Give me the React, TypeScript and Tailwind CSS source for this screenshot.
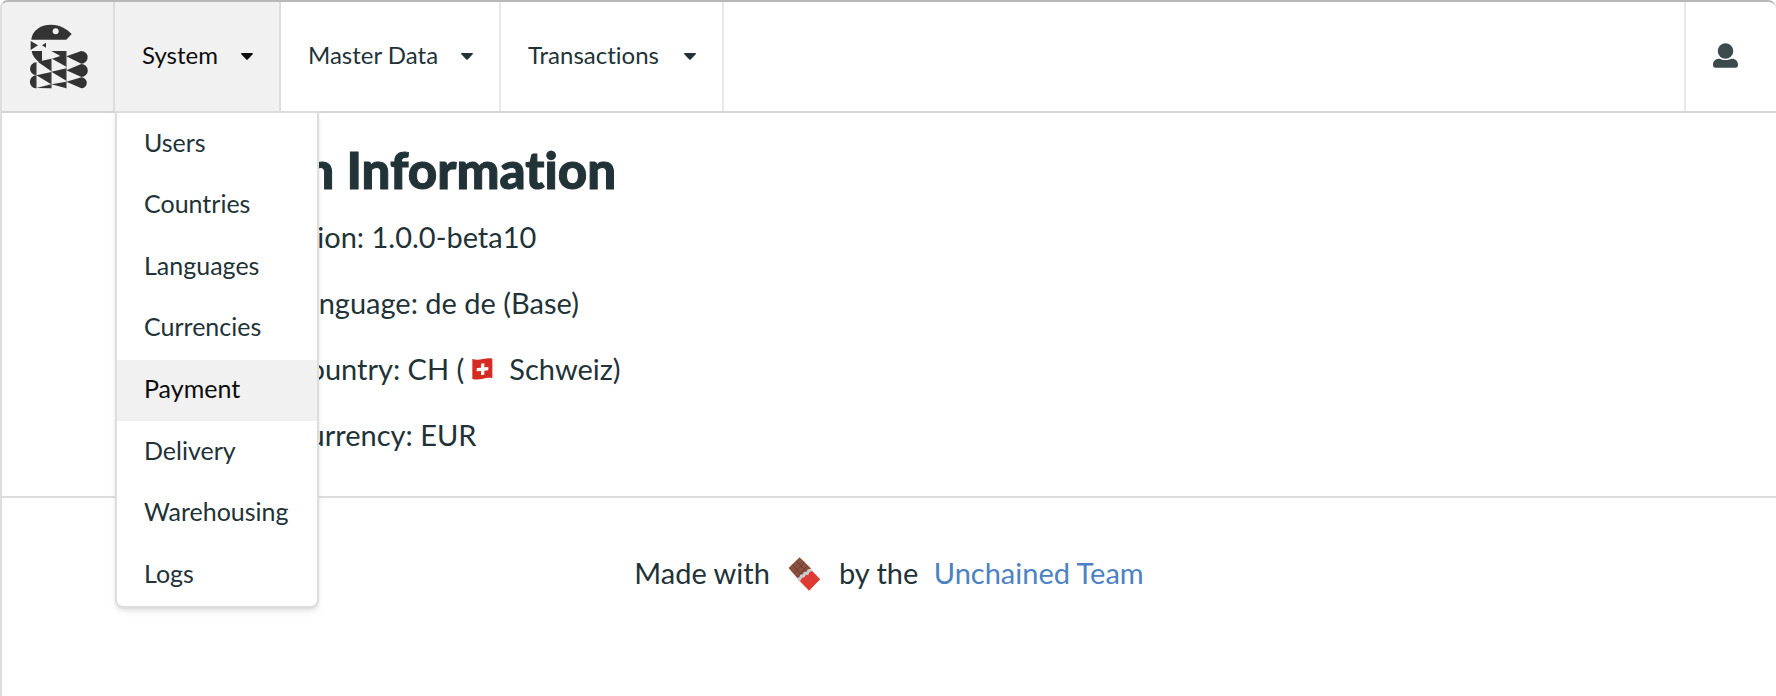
import React from "react";

const systemItems = [
  "Users",
  "Countries",
  "Languages",
  "Currencies",
  "Payment",
  "Delivery",
  "Warehousing",
  "Logs",
];

function Caret() {
  return (
    <svg viewBox="0 0 12 7" className="mt-0.5 h-[7px] w-3" fill="currentColor" aria-hidden="true">
      <path d="M.8 0h10.4c.7 0 1 .8.5 1.3L6.7 6.5a1 1 0 0 1-1.4 0L.3 1.3C-.2.8.1 0 .8 0z" />
    </svg>
  );
}

function Logo() {
  return (
    <svg viewBox="88 70 180 195" className="h-[65px] w-[60px]" fill="#333333" aria-hidden="true">
      <path d="M95 117C97 90 122 72 154 72c28 0 50 15 62 28l-16 17z" />
      <circle cx="168" cy="92" r="9" fill="#f1f1f1" />
      <path d="M93 121l22 13-22 14zM139 126v15l-12-7z" />
      <path d="M96 151h31v29l-9 4c-12-9-20-19-22-33z" />
      <path d="M155 151h45v47l-43-24 25-8z" />
      <path d="M114 183l41-9v38zM110 224l45-10v37zM110 262l45-11v12z" />
      <path d="M155 213l45-10v37zM155 251l45-8v20z" />
      <path d="M110 185a19 19 0 0 0 0 38zM110 224a19 19 0 0 0 0 39z" />
      <path d="M200 167l45-16a19 19 0 0 1 0 38zM200 209l45-19a19 19 0 0 1 0 39zM200 243l45-13a16 16 0 0 1 0 33z" />
      <path d="M110 185v78M155 174v89M200 151v112" stroke="#777777" strokeWidth="2" />
    </svg>
  );
}

function UserIcon() {
  return (
    <svg viewBox="0 0 74 73" className="h-[25px] w-[25px]" fill="#3b4a4c" aria-hidden="true">
      <circle cx="37" cy="23" r="23" />
      <path d="M18 46c5 0 9 4 19 4s14-4 19-4c11 0 18 7 18 18 0 6-2 9-8 9H8c-6 0-8-3-8-9 0-11 7-18 18-18z" />
    </svg>
  );
}

function SwissFlag() {
  return (
    <svg viewBox="0 0 63 66" className="ml-2 mr-4 inline-block h-[22px] w-[21px] align-[0px]" role="img" aria-label="Swiss flag">
      <path d="M1 3c14 4 22 2 32 0s18-4 28-1v59c-10-3-18-1-28 1s-18 4-32 1z" fill="#d62b20" />
      <path d="M27 17l10-1v12l12-1v10l-12 1v12l-10 1V39l-13 1V30l13-1z" fill="#fff" />
    </svg>
  );
}

function Chocolate() {
  return (
    <svg viewBox="0 0 100 104" className="mx-[18px] inline-block h-[34px] w-[33px] align-[-7px]" role="img" aria-label="chocolate">
      <path d="M35 1L1 34l28 32 42-30z" fill="#8b5140" />
      <path d="M24 12l33 34M13 23l28 31M50 14L19 50M58 28L28 62" stroke="#643327" strokeWidth="2" />
      <path d="M36 66l32-29 30 31-34 35-31-32z" fill="#e03a34" />
      <path d="M28 64l7-3 2-7 8-1 3-7 8-1 4-7 10-3 3 8-8 4-3 7-8 1-4 7-8 2-3 7-7 5z" fill="#c9cdcd" />
    </svg>
  );
}

const navButton =
  "flex h-full w-full items-center justify-between pl-[27px] pr-[26px] pb-[3px] text-2xl";

export default function App() {
  return (
    <div className="min-h-screen overflow-hidden rounded-t-lg border-l-2 border-t-2 border-l-[#dddddd] border-t-[#b8b8b8] bg-white font-['Lato',sans-serif] text-[#223337] [font-variant-ligatures:none]">
      <header className="flex h-[111px] border-b-2 border-[#d4d4d5]">
        <a href="#home" aria-label="Home" className="flex w-[113px] items-center border-r-2 border-[#dddddd] bg-[#f1f1f1] pl-[27px]">
          <Logo />
        </a>
        <nav className="flex">
          <div className="relative w-[166px] border-r-2 border-[#dddddd] bg-[#f1f1f1] text-[#0d0d0d]">
            <button type="button" aria-expanded="true" className={navButton}>
              System <Caret />
            </button>
            <div className="absolute left-0 top-full z-10 grid h-[497px] w-[204px] auto-rows-fr rounded-b-lg border-2 border-[#dddddd] bg-white text-[25px] text-[#223337] shadow-md">
              {systemItems.map((item) => (
                <a
                  key={item}
                  href={"#" + item.toLowerCase()}
                  className={
                    item === "Payment"
                      ? "flex items-center bg-[#f1f1f1] px-[27px] pb-[3px] text-[#0d0d0d]"
                      : "flex items-center px-[27px] pb-[3px]"
                  }
                >
                  {item}
                </a>
              ))}
            </div>
          </div>
          <div className="w-[220px] border-r-2 border-[#e8e8e8]">
            <button type="button" className={navButton}>
              Master Data <Caret />
            </button>
          </div>
          <div className="w-[223px] border-r-2 border-[#e8e8e8]">
            <button type="button" className={navButton}>
              Transactions <Caret />
            </button>
          </div>
        </nav>
        <button type="button" aria-label="Account" className="ml-auto flex w-[92px] items-center border-l-2 border-[#e8e8e8] pb-0.5 pl-[27px]">
          <UserIcon />
        </button>
      </header>
      <main className="border-b-2 border-[#dddddd] pb-7 pl-[167px] pt-[27px] text-[29px]">
        <h1 className="mb-1 text-[51px] font-black leading-[60px] [-webkit-text-stroke:1px_#223337]">System Information</h1>
        <p className="leading-[66px]">Engine Version: 1.0.0-beta10</p>
        <p className="leading-[66px]">Standard Language: de de (Base)</p>
        <p className="leading-[66px]">
          Standard Country: CH (<SwissFlag />
          Schweiz)
        </p>
        <p className="leading-[66px]">Standard Currency: EUR</p>
      </main>
      <footer className="pt-[42px] text-center text-[29px] leading-[66px]">
        Made with
        <Chocolate />
        by the{" "}
        <a href="#team" className="ml-2 text-[#4c82c3]">
          Unchained Team
        </a>
      </footer>
    </div>
  );
}
